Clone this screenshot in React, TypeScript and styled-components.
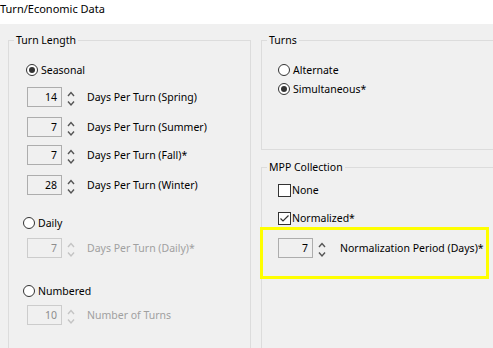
import React from 'react';
import styled, { createGlobalStyle } from 'styled-components';

const FONT = `"Segoe UI", "Noto Sans", "Open Sans", sans-serif`;

const Global = createGlobalStyle`
  html, body { margin: 0; padding: 0; background: #f0f0f0; overflow: hidden; }
  body { font-family: ${FONT}; font-size: 10.5px; color: #000; }
`;

const Page = styled.div`
  width: 493px;
  height: 348px;
  overflow: hidden;
  background: #f0f0f0;
`;

const Header = styled.div`
  height: 24px;
  background: #fff;
  line-height: 18px;
  font-size: 11px;
  white-space: nowrap;
`;

const Body = styled.div`
  display: flex;
  gap: 10px;
  padding: 16px 0 0 8px;
`;

const Group = styled.div<{ $w: number; $h: number; $mt?: number }>`
  box-sizing: border-box;
  width: ${p => p.$w}px;
  height: ${p => p.$h}px;
  margin-top: ${p => p.$mt ?? 0}px;
  border: 1px solid #dcdcdc;
  display: flex;
  flex-direction: column;
  align-items: flex-start;
  flex-shrink: 0;
`;

const Legend = styled.div`
  margin: -8px 0 0 5px;
  padding: 0 2px;
  height: 15px;
  line-height: 15px;
  background: #f0f0f0;
  white-space: nowrap;
`;

const Column = styled.div`
  display: flex;
  flex-direction: column;
  flex-shrink: 0;
`;

const Row = styled.div<{ $mt: number; $indent: number; $disabled?: boolean }>`
  display: flex;
  align-items: center;
  margin-top: ${p => p.$mt}px;
  padding-left: ${p => p.$indent}px;
  height: 16px;
  white-space: nowrap;
  color: ${p => (p.$disabled ? '#a0a0a0' : '#000')};
`;

const SpinRowBox = styled.div<{ $mt: number; $indent: number; $disabled?: boolean }>`
  display: flex;
  align-items: center;
  margin-top: ${p => p.$mt}px;
  padding-left: ${p => p.$indent}px;
  height: 20px;
  white-space: nowrap;
  color: ${p => (p.$disabled ? '#a0a0a0' : '#000')};
`;

const Circle = styled.span<{ $checked?: boolean }>`
  box-sizing: border-box;
  width: 12px;
  height: 12px;
  border-radius: 50%;
  border: 1px solid #333;
  background: #fff;
  display: flex;
  align-items: center;
  justify-content: center;
  margin-right: 3px;
  flex-shrink: 0;
  &::after {
    content: '';
    width: 6px;
    height: 6px;
    border-radius: 50%;
    background: ${p => (p.$checked ? '#333' : 'transparent')};
  }
`;

const Box = styled.span`
  box-sizing: border-box;
  width: 13px;
  height: 13px;
  border: 1px solid #333;
  background: #fff;
  margin-right: 1px;
  display: flex;
  flex-shrink: 0;
`;

const Field = styled.span<{ $disabled?: boolean }>`
  box-sizing: border-box;
  width: 35px;
  height: 20px;
  border: 1px solid ${p => (p.$disabled ? '#cccccc' : '#adadad')};
  background: #f0f0f0;
  color: ${p => (p.$disabled ? '#8d8d8d' : '#000')};
  text-align: right;
  padding-right: 4px;
  line-height: 18px;
  flex-shrink: 0;
`;

const Spinner = styled.svg`
  margin-left: 5px;
  flex-shrink: 0;
`;

const SpinLabel = styled.span<{ $gap: number }>`
  margin-left: ${p => p.$gap}px;
`;

const Highlight = styled.div`
  box-sizing: border-box;
  margin: 1px 0 0 -2px;
  width: 229px;
  height: 52px;
  border: 3px solid #ffff00;
  padding: 8px 0 0 15px;
`;

function Radio({ label, checked, mt, indent, disabled }: { label: string; checked?: boolean; mt: number; indent: number; disabled?: boolean }) {
  return (
    <Row $mt={mt} $indent={indent} $disabled={disabled}>
      <Circle $checked={checked} />
      <span>{label}</span>
    </Row>
  );
}

function Check({ label, checked, mt, indent }: { label: string; checked?: boolean; mt: number; indent: number }) {
  return (
    <Row $mt={mt} $indent={indent}>
      <Box>
        {checked && (
          <svg width="11" height="11" viewBox="0 0 11 11">
            <polyline points="1.5,5.5 4,8 9.5,2.5" fill="none" stroke="#333" strokeWidth="1.2" />
          </svg>
        )}
      </Box>
      <span>{label}</span>
    </Row>
  );
}

function Spin({ value, label, mt, indent, disabled, gap = 12 }: { value: number; label: string; mt: number; indent: number; disabled?: boolean; gap?: number }) {
  const c = disabled ? '#c4c4c4' : '#555';
  return (
    <SpinRowBox $mt={mt} $indent={indent} $disabled={disabled}>
      <Field $disabled={disabled}>{value}</Field>
      <Spinner width="8" height="20" viewBox="0 0 8 20">
        <polyline points="1,9 4,5.5 7,9" fill="none" stroke={c} strokeWidth="1.4" />
        <polyline points="1,14.5 4,18 7,14.5" fill="none" stroke={c} strokeWidth="1.4" />
      </Spinner>
      <SpinLabel $gap={gap}>{label}</SpinLabel>
    </SpinRowBox>
  );
}

export default function App() {
  return (
    <Page>
      <Global />
      <Header>Turn/Economic Data</Header>
      <Body>
        <Group $w={243} $h={330}>
          <Legend>Turn Length</Legend>
          <Radio label="Seasonal" checked mt={14} indent={17} />
          <Spin value={14} label="Days Per Turn (Spring)" mt={9} indent={18} />
          <Spin value={7} label="Days Per Turn (Summer)" mt={10} indent={18} />
          <Spin value={7} label="Days Per Turn (Fall)*" mt={8} indent={18} />
          <Spin value={28} label="Days Per Turn (Winter)" mt={10} indent={18} />
          <Radio label="Daily" mt={20} indent={14} />
          <Spin value={7} label="Days Per Turn (Daily)*" mt={7} indent={18} disabled />
          <Radio label="Numbered" mt={25} indent={14} />
          <Spin value={10} label="Number of Turns" mt={6} indent={18} disabled />
        </Group>
        <Column>
          <Group $w={240} $h={110}>
            <Legend>Turns</Legend>
            <Radio label="Alternate" mt={14} indent={16} />
            <Radio label="Simultaneous*" checked mt={3} indent={16} />
          </Group>
          <Group $w={240} $h={200} $mt={17}>
            <Legend>MPP Collection</Legend>
            <Check label="None" mt={7} indent={16} />
            <Check label="Normalized*" checked mt={12} indent={16} />
            <Highlight>
              <Spin value={7} label="Normalization Period (Days)*" mt={0} indent={0} gap={14} />
            </Highlight>
          </Group>
        </Column>
      </Body>
    </Page>
  );
}
